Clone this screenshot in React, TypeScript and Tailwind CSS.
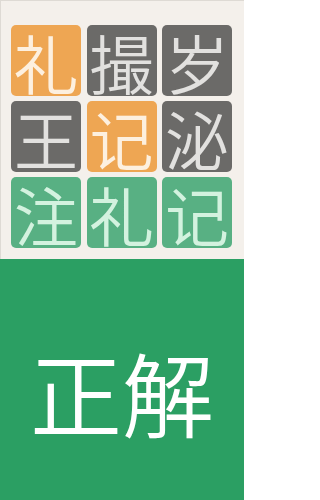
const tiles = [
  { ch: "礼", tone: "orange" },
  { ch: "撮", tone: "gray" },
  { ch: "岁", tone: "gray" },
  { ch: "王", tone: "gray" },
  { ch: "记", tone: "orange" },
  { ch: "泌", tone: "gray" },
  { ch: "注", tone: "green" },
  { ch: "礼", tone: "green" },
  { ch: "记", tone: "green" },
];

const toneClass: Record<string, string> = {
  orange: "bg-[#eea653] text-[#fdf0df]",
  gray: "bg-[#6b6a68] text-[#e2e1df]",
  green: "bg-[#58b083] text-[#d3f2df]",
};

export default function App() {
  return (
    <div
      className="flex h-[500px] w-[244px] flex-col overflow-hidden bg-[#f4f0eb]"
      style={{ fontFamily: '"Noto Sans CJK JP", "Noto Sans CJK SC", sans-serif' }}
    >
      <div className="border-l border-t border-[#dedad4] pb-[11px] pl-[10px] pr-[12px] pt-[24px]">
        <div className="grid grid-cols-3 gap-x-[5.5px] gap-y-[5px]">
          {tiles.map((t, i) => (
            <div
              key={i}
              className={`flex h-[71px] items-center justify-center rounded-[5px] text-[64px] font-[350] leading-none ${toneClass[t.tone]}`}
            >
              {t.ch}
            </div>
          ))}
        </div>
      </div>
      <div className="flex flex-1 items-center justify-center bg-[#2b9f63] pt-[22px] text-[92px] font-[350] leading-none text-white">
        正解
      </div>
    </div>
  );
}
